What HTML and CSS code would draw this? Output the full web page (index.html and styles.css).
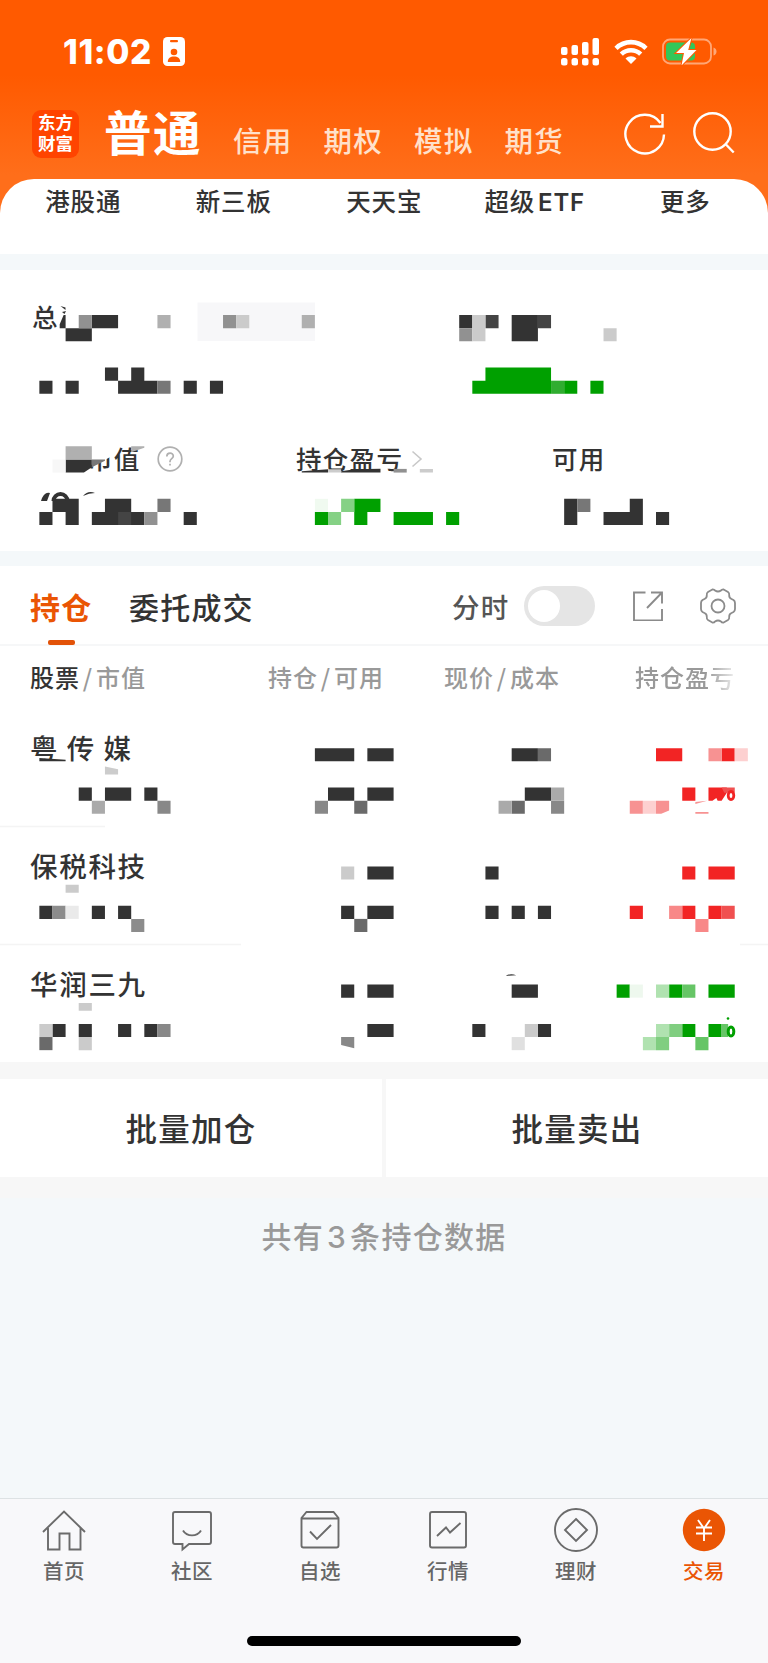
FILE: index.html
```html
<!DOCTYPE html>
<html lang="zh-CN">
<head>
    <meta charset="UTF-8">
    <meta name="viewport" content="width=device-width, initial-scale=1.0">
    <title>交易</title>
    <link rel="stylesheet" href="styles.css">
</head>
<body>
    <header class="top">
        <div class="status-bar">
            <span class="time">11:02</span>
            <svg class="id-card" width="22" height="29" viewBox="0 0 22 29">
                <rect width="22" height="29" rx="4.5" fill="#fff"/>
                <rect x="7" y="3" width="8" height="2.2" rx="1" fill="#ff5a00"/>
                <circle cx="11" cy="15" r="3.3" fill="#ff5a00"/>
                <path d="M4.8 25c0-4 2.600-5.500 6.200-5.500s6.200 1.500 6.200 5.500z" fill="#ff5a00"/>
            </svg>
            <svg class="signal" width="39" height="28" viewBox="0 0 39 28" fill="#fff">
                <rect x="0" y="9" width="6.500" height="8" rx="2"/>
                <rect x="10.500" y="7" width="6.500" height="10" rx="2"/>
                <rect x="21" y="4" width="6.500" height="13" rx="2"/>
                <rect x="31.500" y="0" width="6.500" height="17" rx="2"/>
                <rect x="0" y="20" width="6.500" height="7.500" rx="2.500"/>
                <rect x="10.500" y="20" width="6.500" height="7.500" rx="2.500"/>
                <rect x="21" y="20" width="6.500" height="7.500" rx="2.500"/>
                <rect x="31.500" y="20" width="6.500" height="7.500" rx="2.500"/>
            </svg>
            <svg class="wifi" width="34" height="25" viewBox="0 0 34 25" fill="none" stroke="#fff" stroke-width="4.600">
                <path d="M2 9.300c8.500-8.200 21.500-8.200 30 0"/>
                <path d="M7.300 15.200c5.500-5.200 13.900-5.200 19.400 0"/>
                <path d="M11.500 19.500c3.300-2.900 7.700-2.900 11 0L17 25z" fill="#fff" stroke="none"/>
            </svg>
            <svg class="battery" width="55" height="27" viewBox="0 0 55 27">
                <rect x="1" y="1.500" width="48" height="24" rx="7" fill="none" stroke="#ffa777" stroke-width="1.800"/>
                <path d="M51.500 9.500q3 1 3 4t-3 4z" fill="#ffa777"/>
                <rect x="4" y="4.500" width="29" height="18" rx="4" fill="#34c759"/>
                <path d="M29.500 0 14 15h8l-2.500 12.500L34.500 12h-8.300z" fill="#fff" stroke="#ff5a00" stroke-width="2" paint-order="stroke"/>
            </svg>
        </div>
        <nav class="account-nav">
            <div class="logo">东方<br>财富</div>
            <a class="account active">普通</a>
            <a class="account">信用</a>
            <a class="account">期权</a>
            <a class="account">模拟</a>
            <a class="account">期货</a>
            <svg class="refresh" width="42" height="44" viewBox="0 0 42 44" fill="none" stroke="#fff" stroke-width="2.400">
                <path d="M40 23.500A19.300 19.300 0 1 1 36.500 12"/>
                <path d="M38.500 3v12.500H26"/>
            </svg>
            <svg class="search" width="42" height="44" viewBox="0 0 42 44" fill="none" stroke="#fff" stroke-width="2.400">
                <circle cx="19.500" cy="20.500" r="18.200"/>
                <path d="m32.500 33 8.200 8.500"/>
            </svg>
        </nav>
    </header>

    <nav class="shortcuts">
        <a>港股通</a>
        <a>新三板</a>
        <a>天天宝</a>
        <a>超级<span class="latin">ETF</span></a>
        <a>更多</a>
    </nav>

    <section class="summary">
        <div class="total"><span>总</span></div>
        <div class="figures">
            <div class="figure market">
                <span>市值</span>
                <svg width="26" height="26" viewBox="0 0 26 26" fill="none" stroke="#b0b0b0" stroke-width="1.700">
                    <circle cx="13" cy="13" r="11.800"/>
                    <path d="M9.800 10.500c0-4.600 6.500-4.300 6.500-.5 0 2.700-3.300 2.500-3.300 5.500v.8M13 17.700v1.800"/>
                </svg>
            </div>
            <div class="figure profit">
                <span>持仓盈亏</span>
                <svg width="12" height="18" viewBox="0 0 12 18" fill="none" stroke="#c8c8c8" stroke-width="1.600"><path d="m1.500 1.500 8.500 7.500-8.500 7.500"/></svg>
            </div>
            <div class="figure">可用</div>
        </div>
        <svg class="mosaic" viewBox="0 270 768 281">
            <path d="M80 440h37v13l-12 7-17 6h-8z" fill="#fff"/>
            <path d="M60.500 306l5 1.500v2.500zM62 312l4-1-1.500 3z" fill="#333"/>
            <path d="M197.500 302.500H315v38.500H197.500z" fill="#f7f7f9"/>
            <g transform="scale(13.12 13.127)">
                <path class="c-dark" d="M4.550 25V24.700L4.850 24H5V25zM7 24h2v1h-2zM5 25h2v1h-2zM8 28h1v1h-1zM10 28h1v1h-1zM3 29h1v1h-1zM5 29h1v1h-1zM9 29h3v1h-3zM14 29h1v1h-1zM16 29h1v1h-1z"/>
                <path class="c-dark" d="M35 24h1v1h-1zM39 24h2v2h-2z"/>
                <path class="c-dark" d="M5 35h2v.6L6.400 36H5zM4 38h2v2H5v-1H4zM8 38h2v1h1v1h-4v-1h1zM3 39h1v1h-1zM14 39h1v1h-1z"/>
                <path class="c-dark" d="M43 38h1v2h-1zM48 38h1v2h-3v-1h2zM50 39h1v1h-1z"/>
                <path d="M37 24h1v1h-1zM41 24h1v1h-1zM9 39h1v1h-1z" fill="#444"/>
                <path d="M12 29h1v1h-1zM12 38h1v1h-1zM44 38h1v1h-1zM7 35h1v.1L7 35.600z" fill="#777"/>
                <path d="M6 24h1v1h-1zM35 25h1v1h-1zM11 39h1v1h-1zM17 24h1v1h-1z" fill="#919191"/>
                <path d="M5 34h2v1h-2zM10 34h1v.1l-1 .35zM12 24h1v1h-1zM23 24h1v1h-1z" fill="#b0b0b0"/>
                <path d="M18 24h1v1h-1zM36 24h1v2h-1zM46 25h1v1h-1z" fill="#cbcbcb"/>
                <path d="M4 35h1v1h-1z" fill="#f7f7f7"/>
                <path class="c-green" d="M37 28h5v2h-6v-1h1zM43 29h1v1h-1zM45 29h1v1h-1zM24 39h1v1h-1zM27 38h2v1h-1v1h-1zM30 39h3v1h-3zM34 39h1v1h-1z"/>
                <path d="M42 29h1v1h-1z" fill="#30ad30"/>
                <path d="M26 38h1v1h-1zM25 39h1v1h-1z" fill="#85d185"/>
                <path d="M24 38h1v1h-1z" fill="#f0faf0"/>
                <path class="c-dark" d="M23 35.900l2-.15V36h-2zM26 35.900l1-.15 2-.05v.3h-3z"/>
                <path d="M25 35.750h1v.25h-1zM32 35.720h1v.28h-1z" fill="#ccc"/>
                <path d="M30 35.720h1v.28h-1z" fill="#919191"/>
            </g>
            <!-- tops of the figures above the blocks -->
            <path d="M42 498q3-6 8-5l-3 8h-6z" fill="#333"/>
            <path d="M53.500 501a7 7 0 0 1 14 0" fill="none" stroke="#333" stroke-width="4"/>
            <path d="M83 496q5-6 12-3-6 0-12 3z" fill="#333"/>
        </svg>
    </section>

    <section class="holdings">
        <div class="tabs">
            <a class="tab current">持仓</a>
            <a class="tab">委托成交</a>
            <span class="switch-label">分时</span>
            <span class="switch"></span>
            <svg class="share" width="30" height="30" viewBox="0 0 30 30" fill="none" stroke="#8b8b8b" stroke-width="1.900">
                <path d="M12.500 1.500H1v28h28V18M18 1.500h11v11M28.500 2 14 17"/>
            </svg>
            <svg class="gear" width="36" height="36" viewBox="0 0 36 36" fill="none" stroke="#8b8b8b" stroke-width="1.800" stroke-linejoin="round">
                <path d="M12.800 1.300 8 4Q6.500 5 6.800 7 7 10 4.500 11L2.500 12Q1 13 1 15v6q0 2 1.500 3l2 1Q7 26 6.800 29q-.3 2 1.200 3l4.800 2.700q1.500 0 2.200-1.200 3-2 6 0 .7 1.200 2.200 1.200L28 32q1.500-1 1.200-3-.2-3 2.300-4l2-1q1.500-1 1.500-3v-6q0-2-1.500-3l-2-1q-2.500-1-2.300-4 .3-2-1.200-3l-4.800-2.700q-1.500 0-2.200 1.200-3 2-6 0-.7-1.200-2.200-1.200z"/>
                <circle cx="18" cy="18" r="6.500"/>
            </svg>
        </div>
        <div class="columns">
            <span><b>股票</b><i>/</i>市值</span>
            <span>持仓<i>/</i>可用</span>
            <span>现价<i>/</i>成本</span>
            <span class="fade">持仓盈亏</span>
        </div>
        <div class="stock spaced">粤传媒</div>
        <div class="stock">保税科技</div>
        <div class="stock">华润三九</div>
        <svg class="mosaic" viewBox="0 566 768 496">
            <path d="M0 826.500h105M0 944.500h241M740 944.500h28" stroke="#f4f4f4" stroke-width="1.500"/>
            <g transform="scale(13.12 13.127)">
                <!-- 粤传媒 -->
                <path class="c-dark" d="M3 57.750l2 .12v.13h-2zM24 57h3v1h-3zM28 57h2v1h-2zM39 57h2v1h-2zM6 60h1v1h-1zM8 60h2v1h-2zM11 60h1v1h-1zM25 60h2v1h-2zM28 60h2v1h-2zM40 60h2v1h-2z"/>
                <path d="M41 57h1v1h-1zM27 61h1v1h-1zM39 61h1v1h-1z" fill="#6a6a6a"/>
                <path d="M24 61h1v1h-1zM12 61h1v1h-1zM42 61h1v1h-1z" fill="#888"/>
                <path d="M7 61h1v1h-1zM38 61h1v1h-1zM42 60h1v1h-1z" fill="#aaa"/>
                <path d="M8 58.400l1 .2v.4h-1z" fill="#ccc"/>
                <path class="c-red" d="M50 57h2v1h-2zM55 57h1v1h-1zM52 60h1v1h-1zM54 60h1.400v.4l-.4.600h-.3l-.1-.2-.3.200H54z"/>
                <path d="M55 60h1v.4h-.8z" fill="#f05050"/>
                <path d="M54 57h1v1h-1zM48 61h1v1h-1zM50 61h1v.75l-.6.250h-.4zM53 61.100l.9-.1-.9.250zM53 61.850h1v.15h-1z" fill="#f79292"/>
                <path d="M56 57h1v1h-1zM49 61h1v1h-1z" fill="#fdd0d0"/>
                <!-- 保税科技 -->
                <path class="c-dark" d="M28 66h2v1h-2zM37 66h1v1h-1zM3 69h1v1h-1zM7 69h1v1h-1zM9 69h1v1h-1zM26 69h1v1h-1zM28 69h2v1h-2zM37 69h1v1h-1zM39 69h1v1h-1zM41 69h1v1h-1z"/>
                <path d="M27 70h1v1h-1z" fill="#6a6a6a"/>
                <path d="M4 69h1v1h-1zM10 70h1v1h-1z" fill="#8c8c8c"/>
                <path d="M26 66h1v1h-1zM5 67.400h1v.6h-1z" fill="#cbcbcb"/>
                <path d="M5 69h1v1h-1z" fill="#eaeaea"/>
                <path class="c-red" d="M52 66h1v1h-1zM54 66h2v1h-2zM48 69h1v1h-1zM52 69h1v1h-1zM54 69h1v1h-1z"/>
                <path d="M55 69h1v1h-1z" fill="#f05050"/>
                <path d="M51 69h1v1h-1zM53 70h1v1h-1z" fill="#f88888"/>
                <!-- 华润三九 -->
                <path class="c-dark" d="M26 75h1v1h-1zM28 75h2v1h-2zM39 75h2v1h-2zM4 78h1v1h-1zM6 78h1v1h-1zM9 78h1v1h-1zM11 78h1v1h-1zM28 78h2v1h-2zM36 78h1v1h-1zM41 78h1v1h-1zM38.550 74.360q.3-.25.8-.07-.4 0-.8.070z"/>
                <path d="M3 79h1v1h-1z" fill="#6a6a6a"/>
                <path d="M12 78h1v1h-1zM26 79h1v.85L26 79.600z" fill="#888"/>
                <path d="M3 78h1v1h-1zM6 76.400h1v.6h-1zM6 79h1v1h-1zM40 78h1v1h-1z" fill="#cbcbcb"/>
                <path d="M39 79h1v1h-1z" fill="#e0e0e0"/>
                <path class="c-green" d="M47 75h1v1h-1zM51 75h1v1h-1zM54 75h2v1h-2zM52 78h1v1h-1zM54 78h1v1h-1z"/>
                <path d="M52 75h1v1h-1zM53 79h1v1h-1zM55 78h.5v1h-.5z" fill="#66c566"/>
                <path d="M51 78h1v1h-1zM50 79h1v1h-1z" fill="#80ce80"/>
                <path d="M50 75h1v1h-1zM50 78h1v1h-1zM49 79h1v1h-1z" fill="#b0e2b0"/>
                <path d="M48 75h1v1h-1z" fill="#eef8ee"/>
            </g>
            <!-- leftover percent sign ends -->
            <ellipse cx="731" cy="795.500" rx="2.800" ry="4" fill="#fff" stroke="#f22424" stroke-width="2.800"/>
            <ellipse cx="731" cy="1031.500" rx="2.800" ry="4.500" fill="#fff" stroke="#00a000" stroke-width="3"/>
            <circle cx="728" cy="1018.500" r="1.300" fill="#00a000"/>
        </svg>
    </section>

    <div class="batch">
        <button>批量加仓</button>
        <button>批量卖出</button>
    </div>

    <p class="count">共有<span class="num">3</span>条持仓数据</p>

    <footer class="tabbar">
        <a class="item">
            <svg width="46" height="46" viewBox="0 0 46 46"><path d="M2 24 23 3.500 44 24M7 20v21.500h11.500v-16h10v16H39.500V20"/></svg>
            首页
        </a>
        <a class="item">
            <svg width="46" height="46" viewBox="0 0 46 46"><path d="M6 4h34q2 0 2 2v28q0 2-2 2H20l-6.500 5.500V36H6q-2 0-2-2V6q0-2 2-2zM14 22.500c4 6.500 14 6.500 18 0"/></svg>
            社区
        </a>
        <a class="item">
            <svg width="46" height="46" viewBox="0 0 46 46"><path d="M9.500 4h27l5 6v27.500q0 2-2 2h-33q-2 0-2-2V10zM4.500 10.500h37M13 23.500l7 7.500 14-14"/></svg>
            自选
        </a>
        <a class="item">
            <svg width="46" height="46" viewBox="0 0 46 46"><rect x="5" y="4" width="36" height="35.500" rx="2"/><path d="m12 28 9-8.500 4 5 10.500-9.500"/></svg>
            行情
        </a>
        <a class="item">
            <svg width="46" height="46" viewBox="0 0 46 46"><circle cx="23" cy="22" r="21"/><path d="m23 11 11 11-11 11-11-11z"/></svg>
            理财
        </a>
        <a class="item on">
            <svg width="46" height="46" viewBox="0 0 46 46"><circle class="disc" cx="23" cy="22" r="21.200"/><path class="yen" d="m17 12 6 8.500 6-8.500M23 20.500V33M15 19.500h16M15 25.500h16"/></svg>
            交易
        </a>
        <div class="home-bar"></div>
    </footer>
</body>
</html>
```
FILE: styles.css
```css
* {
    box-sizing: border-box;
}
body {
    margin: 0;
    width: 768px;
    height: 1663px;
    overflow: hidden;
    background: #f4f8fa;
    color: #333;
    font-family: "Noto Sans CJK SC", sans-serif;
    font-weight: 500;
}
svg {
    display: block;
    flex: none;
}
.top {
    height: 230px;
    background: linear-gradient(#ff5a00 0, #ff5a00 75px, #ff6e1a 175px);
    color: #fff;
}
.status-bar {
    display: flex;
    align-items: center;
    height: 103px;
    padding-left: 63px;
}
.time {
    width: 100px;
    font-family: Inter, sans-serif;
    font-size: 33.5px;
    font-weight: 800;
    letter-spacing: 0.6px;
}
.signal {
    margin-left: 376px;
}
.wifi {
    margin-left: 14px;
}
.battery {
    margin-left: 14px;
}
.account-nav {
    display: flex;
    height: 62px;
    padding-left: 32px;
    line-height: 62px;
}
.logo {
    width: 47px;
    height: 48px;
    margin: 7px 25px 0 0;
    padding-top: 3px;
    border-radius: 9px;
    background: #ff4400;
    font-family: "Liberation Sans", "Noto Sans CJK SC", sans-serif;
    font-size: 17.5px;
    font-weight: 700;
    line-height: 20.5px;
    text-align: center;
}
.account {
    width: 90.5px;
    padding-top: 6px;
    font-size: 28.5px;
    letter-spacing: 1.2px;
    color: #ffe1cb;
    white-space: nowrap;
}
.account.active {
    width: 129px;
    padding-top: 0;
    font-size: 47.5px;
    line-height: 55px;
    letter-spacing: 1.5px;
    color: #fff;
    font-weight: 700;
}
.refresh {
    margin: 8px 27px 0 29px;
}
.search {
    margin-top: 8px;
}
.shortcuts {
    display: grid;
    grid-template-columns: repeat(5, 150.5px);
    height: 75px;
    margin-top: -51px;
    padding-left: 8px;
    border-radius: 34px 34px 0 0;
    background: #fff;
    font-size: 24.5px;
    line-height: 44px;
    letter-spacing: 0.8px;
    text-align: center;
}
.latin {
    margin-left: 3px;
    font-family: Inter, sans-serif;
    font-size: 24px;
    font-weight: 600;
}
.summary {
    position: relative;
    height: 281px;
    margin-top: 16px;
    padding: 29px 0 0 32px;
    background: #fff;
    font-size: 25.5px;
    line-height: 34px;
    letter-spacing: 1.3px;
}
.mosaic {
    position: absolute;
    left: 0;
    top: 0;
    width: 100%;
    height: 100%;
}
.c-dark {
    fill: #333;
}
.c-green {
    fill: #00a000;
}
.c-red {
    fill: #f22424;
}
.figures {
    display: grid;
    grid-template-columns: 264px 256px 150px;
    margin-top: 108px;
}
.figure {
    display: flex;
    align-items: center;
}
.market {
    padding-left: 55px;
}
.market svg {
    margin: 2px 0 0 16px;
}
.profit svg {
    margin: 2px 0 0 8px;
}
.holdings {
    position: relative;
    height: 496px;
    margin-top: 15px;
    background: #fff;
}
.tabs {
    display: flex;
    align-items: center;
    height: 80px;
    padding: 2px 0 0 30px;
    border-bottom: 2px solid #f6f7f8;
    font-size: 30px;
    letter-spacing: 1.2px;
}
.tab {
    position: relative;
    width: 223px;
    line-height: 76px;
    white-space: nowrap;
}
.tab.current {
    width: 99px;
    color: #ea5504;
    font-weight: 700;
}
.tab.current::after {
    content: "";
    position: absolute;
    left: 18px;
    bottom: -1px;
    width: 27px;
    height: 5.500px;
    border-radius: 2px;
    background: #e25208;
}
.switch-label {
    width: 72px;
    margin-left: 100px;
    font-size: 27.5px;
    color: #555;
}
.switch {
    width: 71px;
    height: 40px;
    padding: 4px;
    border-radius: 20px;
    background: #e5e5e5;
}
.switch::before {
    content: "";
    display: block;
    width: 32px;
    height: 32px;
    border-radius: 50%;
    background: #fff;
}
.share {
    margin-left: 38px;
}
.gear {
    margin-left: 37px;
}
.columns {
    display: grid;
    grid-template-columns: 238px 176px 191px 100px;
    padding-left: 30px;
    font-size: 24px;
    line-height: 61px;
    letter-spacing: 1px;
    color: #999;
    white-space: nowrap;
}
.columns b {
    color: #333;
    font-weight: 500;
}
.columns i {
    display: inline-block;
    width: 16px;
    font-style: normal;
    text-align: center;
}
.fade {
    -webkit-mask-image: linear-gradient(90deg, #000 72%, transparent 106%);
    mask-image: linear-gradient(90deg, #000 72%, transparent 106%);
}
.stock {
    height: 118px;
    padding: 18px 0 0 30px;
    font-size: 27.5px;
    line-height: 44px;
    letter-spacing: 1.7px;
}
.stock.spaced {
    letter-spacing: 9.200px;
}
.batch {
    display: grid;
    grid-template-columns: 382px 382px;
    gap: 4px;
    height: 136px;
    padding: 17px 0 21px;
    background: #f7f7f7;
}
.batch button {
    padding-bottom: 4px;
    border: none;
    background: #fff;
    color: #333;
    font-family: inherit;
    font-size: 31.5px;
    font-weight: 500;
    letter-spacing: 1.300px;
}
.count {
    height: 300px;
    margin: 0;
    font-size: 30px;
    line-height: 74px;
    letter-spacing: 1.300px;
    text-align: center;
    color: #999;
}
.num {
    margin: 0 3px;
    font-family: Inter, sans-serif;
}
.tabbar {
    display: grid;
    grid-template-columns: repeat(6, 128px);
    grid-template-rows: 137px 10px;
    height: 165px;
    border-top: 1px solid #dde2e4;
    background: #f8f8fa;
}
.item {
    display: flex;
    flex-direction: column;
    align-items: center;
    padding-top: 9px;
    font-size: 20.5px;
    line-height: 32px;
    letter-spacing: 0.5px;
    color: #666;
}
.item svg {
    fill: none;
    stroke: #6b6b6b;
    stroke-width: 1.900;
}
.item.on {
    color: #ea5504;
}
.item .disc {
    fill: #ea5504;
    stroke: none;
}
.item .yen {
    stroke: #fff;
}
.home-bar {
    grid-column: 1 / -1;
    justify-self: center;
    width: 274px;
    height: 10px;
    border-radius: 5px;
    background: #000;
}
```
